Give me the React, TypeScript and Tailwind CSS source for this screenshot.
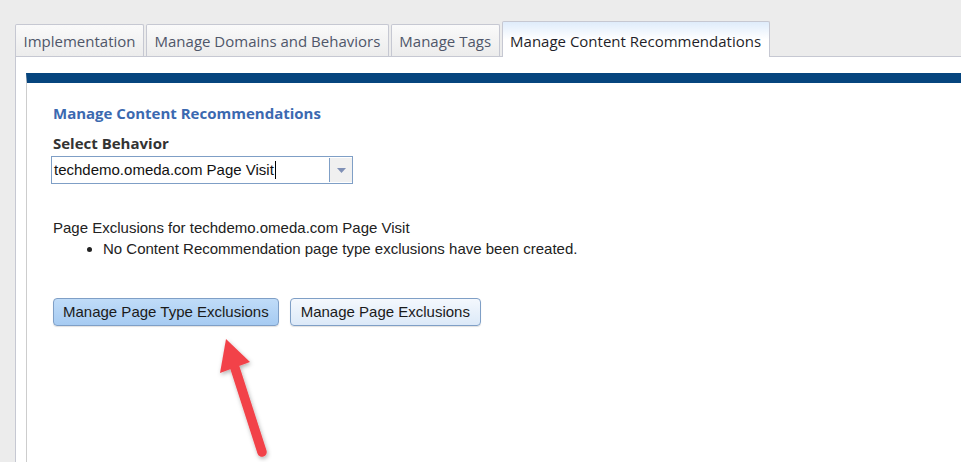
import React from 'react';

const tabs = ['Implementation', 'Manage Domains and Behaviors', 'Manage Tags'];

const App = () => {
  return (
    <div className="relative h-[462px] w-[961px] overflow-hidden bg-[#ececec] pl-[15px] pt-[21px]" style={{ fontFamily: 'Arial, "Liberation Sans", sans-serif' }}>
      {/* tab strip */}
      <div className="flex items-end gap-[2px] font-['Open_Sans',sans-serif] text-[15px]">
        {tabs.map(t => (
          <div
            key={t}
            className="h-[32px] rounded-t-[2px] border border-b-0 border-[#c6c8d2] bg-gradient-to-b from-[#fafafa] to-[#ececec] px-[7.5px] leading-[33px] text-[#4f5669]"
          >
            {t}
          </div>
        ))}
        <div className="relative z-10 -mb-px h-[36px] rounded-t-[2px] border border-b-0 border-[#c6c8d2] bg-gradient-to-b from-[#dfecfb] via-white to-white px-[7.5px] leading-[38px] text-[#1f1f2a]">
          Manage Content Recommendations
        </div>
      </div>

      {/* outer panel */}
      <div className="h-[420px] border-l border-t border-[#c6c8d2] bg-white pl-[10px] pt-[16px]">
        <div className="h-full border-l border-[#cdcdcd] border-t-[10px] border-t-[#06457e] pl-[26px] pt-[20px]">
          <h2 className="font-['Open_Sans',sans-serif] text-[15px] font-bold leading-[20px] text-[#3b69b0]">
            Manage Content Recommendations
          </h2>
          <div className="mt-[10px] font-['Open_Sans',sans-serif] text-[15px] font-bold leading-[21px] text-[#333]">
            Select Behavior
          </div>
          <div className="-ml-[2px] mt-[2px] flex h-[28px] w-[302px] border border-[#7f9fc6] bg-white">
            <div className="flex flex-1 items-center pl-[2px] text-[15px] text-[#111]">
              techdemo.omeda.com Page Visit
              <span className="ml-px inline-block h-[18px] w-px bg-black" />
            </div>
            <div className="my-px flex w-[23px] items-center justify-center border-l border-[#7f9fc6] bg-[#f0f0f0]">
              <svg width="9" height="5" viewBox="0 0 9 5">
                <path d="M0 0h9L4.5 5z" fill="#7f90b6" />
              </svg>
            </div>
          </div>

          <div className="mt-[33px] text-[15px] leading-[21px] text-[#222]">
            Page Exclusions for techdemo.omeda.com Page Visit
          </div>
          <ul className="list-disc pl-[50px] text-[15px] leading-[21px] text-[#222]">
            <li>No Content Recommendation page type exclusions have been created.</li>
          </ul>

          <div className="mt-[39px] flex gap-[11px]">
            <button className="h-[28px] rounded-[4px] border border-[#7f9fc6] bg-gradient-to-b from-[#c0dcf8] to-[#a6cbf2] px-[9px] text-[15px] text-[#1a1a1a] shadow-[0_1px_1px_rgba(0,0,0,0.12)]">
              Manage Page Type Exclusions
            </button>
            <button className="h-[28px] rounded-[4px] border border-[#7f9fc6] bg-gradient-to-b from-[#f4f8fd] to-[#dce9f8] px-[10px] text-[15px] text-[#1a1a1a] shadow-[0_1px_1px_rgba(0,0,0,0.12)]">
              Manage Page Exclusions
            </button>
          </div>
        </div>
      </div>

      {/* annotation arrow */}
      <svg className="absolute left-[205px] top-[330px]" width="70" height="132" viewBox="0 0 70 132">
        <defs>
          <filter id="sh" x="-30%" y="-30%" width="160%" height="160%">
            <feDropShadow dx="1" dy="2" stdDeviation="2" floodColor="#000" floodOpacity="0.3" />
          </filter>
        </defs>
        <g filter="url(#sh)">
          <line x1="57" y1="122" x2="30" y2="38" stroke="#f2434a" strokeWidth="9.5" strokeLinecap="round" />
          <path d="M21 9 L15 43 L45 32 Z" fill="#f2434a" />
        </g>
      </svg>
    </div>
  );
};

export default App;
